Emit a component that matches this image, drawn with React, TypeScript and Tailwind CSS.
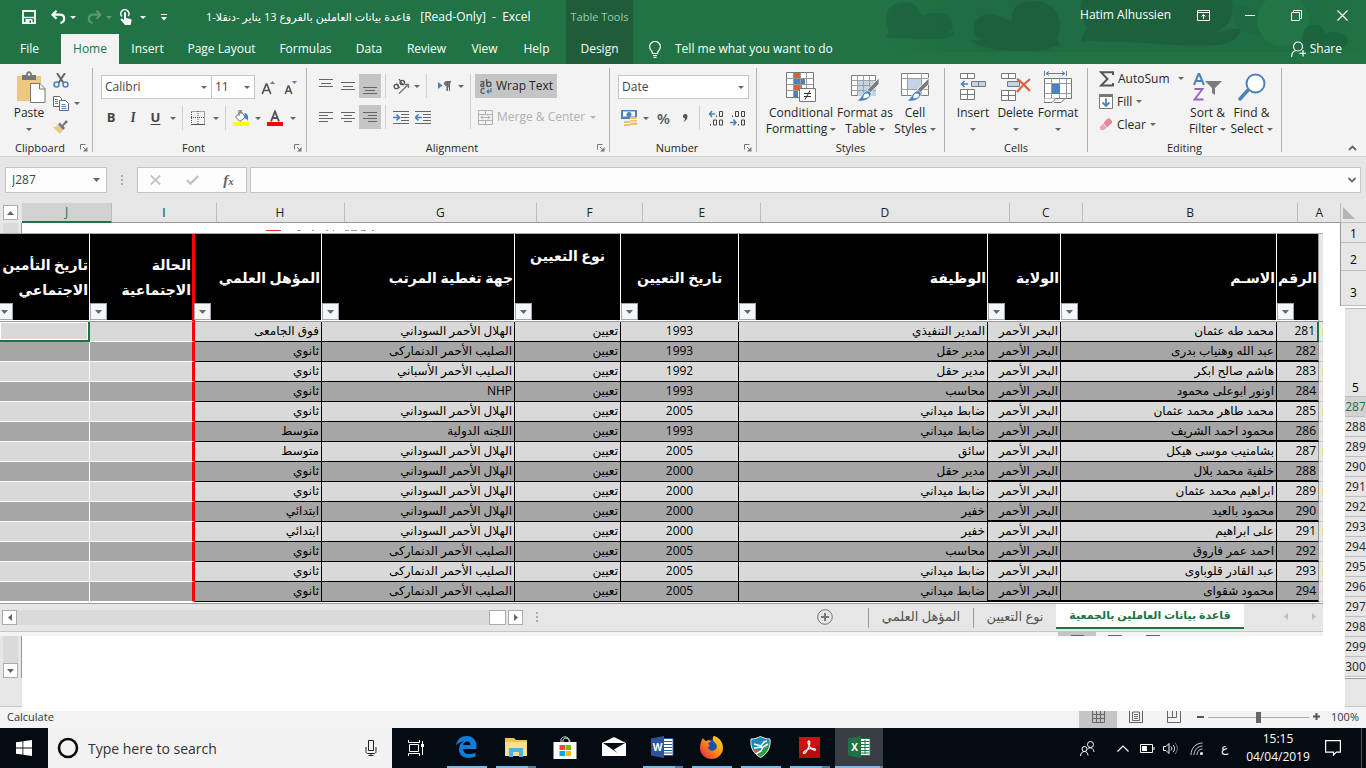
import React from "react";
import type { ReactNode } from "react";

/* ---------- shared bits ---------- */

function Caret({ className = "text-[#666]" }: { className?: string }) {
  return (
    <svg className={"h-[3px] w-[6px] shrink-0 " + className} viewBox="0 0 6 3" aria-hidden="true">
      <path d="M0 0h6L3 3z" fill="currentColor" />
    </svg>
  );
}

function CaretButton({ label, className = "w-3", disabled = false }: { label: string; className?: string; disabled?: boolean }) {
  return (
    <button aria-label={label} className={"flex h-6 items-center justify-center " + className}>
      <Caret className={disabled ? "text-[#b5b5b5]" : "text-[#666]"} />
    </button>
  );
}

function IconButton({
  label,
  className = "w-[22px]",
  active = false,
  children,
}: {
  label: string;
  className?: string;
  active?: boolean;
  children: ReactNode;
}) {
  return (
    <button
      aria-label={label}
      className={"flex h-6 shrink-0 items-center justify-center " + className + (active ? " bg-[#c5c5c5]" : "")}
    >
      {children}
    </button>
  );
}

function Divider() {
  return <div className="h-6 w-px shrink-0 bg-[#d0d0d0]" />;
}

function Launcher({ label }: { label: string }) {
  return (
    <button aria-label={label} className="mr-1 shrink-0">
      <svg className="h-2 w-2" viewBox="0 0 8 8" fill="none" stroke="#777">
        <path d="M.5 5.500V.5h5M3 3l3 3" />
        <path d="M7.500 3v4.500H3z" fill="#777" stroke="none" />
      </svg>
    </button>
  );
}

function Group({
  name,
  className,
  launcher = true,
  children,
}: {
  name: string;
  className: string;
  launcher?: boolean;
  children: ReactNode;
}) {
  return (
    <section aria-label={name} className={"flex shrink-0 " + className}>
      <div className="flex min-w-0 flex-1 flex-col">
        <div className="flex-1">{children}</div>
        <div className="flex h-4 items-center">
          <h2 className="flex-1 text-center text-[11px] leading-4 text-[#262626]">{name}</h2>
          {launcher && <Launcher label={name + " settings"} />}
        </div>
      </div>
      <div className="my-1 w-px bg-[#b1b1b1]" />
    </section>
  );
}

function BigButton({ lines, className, children }: { lines: [string, string?]; className: string; children: ReactNode }) {
  return (
    <button className={"flex shrink-0 flex-col items-center text-[12px] leading-4 whitespace-nowrap text-[#262626] " + className}>
      <span className="flex h-9 items-center justify-center">{children}</span>
      <span>{lines[0]}</span>
      <span className="flex h-4 items-center gap-[3px]">
        {lines[1]}
        <Caret />
      </span>
    </button>
  );
}

function LineIcon({ rows }: { rows: [number, number, number][] }) {
  return (
    <svg className="h-[18px] w-[14px]" viewBox="0 0 14 18" stroke="#666">
      {rows.map(([y, a, b]) => (
        <path key={y} d={`M${a} ${y + 0.5}H${b}`} />
      ))}
    </svg>
  );
}

/* ---------- header ---------- */

const tabs: [string, string][] = [
  ["File", "w-[59px]"],
  ["Home", "w-[58px]"],
  ["Insert", "w-[57px]"],
  ["Page Layout", "w-[91px]"],
  ["Formulas", "w-[77px]"],
  ["Data", "w-[50px]"],
  ["Review", "w-[65px]"],
  ["View", "w-[51px]"],
  ["Help", "w-[53px]"],
];

function Header() {
  return (
    <header className="flex h-16 shrink-0 bg-[#217346] text-[12px] text-white">
      <div className="flex w-[566px] shrink-0 flex-col">
        <div className="flex h-[34px] items-center">
          <button aria-label="Save" className="ml-[22px]">
            <svg className="h-[14px] w-[14px]" viewBox="0 0 14 14" fill="none" stroke="#fff" strokeWidth="1.800">
              <path d="M1 1h12v12H1z" />
              <path d="M2 7.500h10" strokeWidth="1.400" />
              <path d="M3.500 9h7v4.500h-7z" fill="#fff" stroke="none" />
              <path d="M7.500 10.500H9V13H7.500z" fill="#217346" stroke="none" />
            </svg>
          </button>
          <button aria-label="Undo" className="ml-[15px]">
            <svg className="h-[14px] w-[15px]" viewBox="0 0 15 14" fill="none" stroke="#fff" strokeWidth="2.200">
              <path d="M5.500 .8 1.500 4.700l4 4M2 4.700h7c5.500 0 5.500 7 .5 8.300" />
            </svg>
          </button>
          <Caret className="ml-[4px] text-white" />
          <button aria-label="Redo" className="ml-[11px] opacity-25">
            <svg className="h-[14px] w-[15px]" viewBox="0 0 15 14" fill="none" stroke="#fff" strokeWidth="2.200">
              <path d="M9.500 .8l4 3.900-4 4M13 4.700H6c-5.500 0-5.500 7-.5 8.300" />
            </svg>
          </button>
          <Caret className="ml-[4px] text-white opacity-30" />
          <button aria-label="Touch mode" className="ml-[8px]">
            <svg className="h-4 w-3" viewBox="0 0 12 16" fill="#fff">
              <path d="M4 4c0-1.500 2-1.500 2 0v5l4.500 1c1 .3 1.300 1 1 2l-1 4H5L.8 11c-.6-1 .7-2 1.600-1.200L4 11z" />
              <path d="M2 7.500A4 4 0 1 1 8.200 7" fill="none" stroke="#fff" strokeWidth="1.400" />
            </svg>
          </button>
          <Caret className="ml-[8px] text-white" />
          <button aria-label="Customize toolbar" className="ml-[15px]">
            <svg className="h-[7px] w-[6px]" viewBox="0 0 6 7" fill="#fff">
              <path d="M0 0h6v1H0zM0 3h6L3 6.500z" />
            </svg>
          </button>
          <h1 className="ml-[39px] text-[12px] leading-4 whitespace-pre">
            <bdi dir="rtl" className="text-[11px]">قاعدة بيانات العاملين بالفروع 13 يناير -دنقلا-1</bdi>
            {"   [Read-Only]  -  Excel"}
          </h1>
        </div>
        <nav className="flex h-[30px]">
          {tabs.map(([name, width]) => (
            <button
              key={name}
              className={
                "flex shrink-0 items-center justify-center whitespace-nowrap " +
                width +
                (name === "Home" ? " ml-[2px] bg-[#f3f3f3] text-[#217346]" : "")
              }
            >
              {name}
            </button>
          ))}
        </nav>
      </div>
      <div className="flex w-[67px] shrink-0 flex-col bg-[#1e5c3a]">
        <div className="flex h-[34px] items-center justify-center text-[11px] whitespace-nowrap text-[#9ccdae]">Table Tools</div>
        <button className="h-[30px]">Design</button>
      </div>
      <div className="relative flex min-w-0 flex-1 flex-col">
        <svg className="absolute top-0 right-0 h-[52px] w-[480px]" viewBox="0 0 480 52" fill="#1c613c" aria-hidden="true">
          <defs>
            <linearGradient id="shade" x1="0" y1="0" x2="1" y2="0">
              <stop offset="0" stopColor="#1c613c" stopOpacity="0" />
              <stop offset=".2" stopColor="#1c613c" stopOpacity=".4" />
              <stop offset=".85" stopColor="#1c613c" stopOpacity=".3" />
              <stop offset="1" stopColor="#1c613c" stopOpacity=".1" />
            </linearGradient>
          </defs>
          <path d="M0 0h480v52H0z" fill="url(#shade)" />
          <path d="M0 16C2 6 10 2 18 2c12 0 16 8 18 14 12-6 28-4 30 6 2 6 0 9-6 11 6 0 10-2 8 2-10 8-40 2-68 3 2-4 3-6 2-10-3-3-3-8-2-12z" opacity=".75" />
          <path d="M88 32c-2-12 8-20 20-17 8 2 14 6 18 6-2-14 8-20 22-20 18 0 27 14 26 26-1 5-1 8-3 10 2 4 2 8 4 11-4-2-8-2-12 1-14 3-36 2-50 1-10-2-24-4-29-11 4 2 10 2 12 1-4-2-7-4-8-8z" opacity=".9" />
          <path d="M196 0h150c2 16-2 26-16 32 8 0 14-4 24-3 2 6-8 16-26 16-36 2-76-4-106-3-10 0-20-2-27 1 1-7 4-12 6-16-6-9-8-18-5-27z" />
          <path d="M346 10c8-6 20-4 28 2 6-4 14 0 16 4l-8 22-30-8z" opacity=".3" />
          <ellipse cx="397" cy="20" rx="26" ry="26" fill="#217546" />
          <path d="M417 40c-2-10 4-15 11-15 8 0 11 5 11 9 8-4 20-2 22 4s-2 9-6 11l-34 2c-2-4-3-7-4-11z" opacity=".8" />
        </svg>
        <div className="relative flex h-[34px] items-center justify-end pr-[18px] pb-1">
          <span className="leading-4">Hatim Alhussien</span>
          <button aria-label="Ribbon display options" className="ml-[26px]">
            <svg className="h-[11px] w-[13px]" viewBox="0 0 13 11" fill="none" stroke="#fff">
              <path d="M.5.5h12v10H.5zM.5 2.500h12M6.500 9V4.500M4.500 6.500l2-2 2 2" />
            </svg>
          </button>
          <button aria-label="Minimize" className="ml-[35px]">
            <svg className="h-[10px] w-[10px]" viewBox="0 0 10 10" stroke="#fff"><path d="M0 5.500h10" /></svg>
          </button>
          <button aria-label="Restore" className="ml-[36px]">
            <svg className="h-[11px] w-[11px]" viewBox="0 0 11 11" fill="none" stroke="#fff">
              <path d="M.5 2.500h8v8h-8zM2.500 2.500v-2h8v8h-2" />
            </svg>
          </button>
          <button aria-label="Close" className="ml-[35px]">
            <svg className="h-[11px] w-[11px]" viewBox="0 0 11 11" stroke="#fff" strokeWidth="1.200"><path d="m.5.5 10 10m0-10-10 10" /></svg>
          </button>
        </div>
        <div className="relative flex h-[30px] items-center pr-6 pl-4">
          <svg className="h-[17px] w-3" viewBox="0 0 12 17" fill="none" stroke="#fff" strokeWidth="1.200" aria-hidden="true">
            <path d="M3.500 12.500c0-3-2.900-3.500-2.900-7a5.400 5 0 0 1 10.800 0c0 3.500-2.900 4-2.900 7zM4 14.500h4M4.500 16.300h3" />
          </svg>
          <button className="ml-[14px] leading-4">Tell me what you want to do</button>
          <button className="ml-auto flex items-center gap-1 leading-4">
            <svg className="h-4 w-[15px]" viewBox="0 0 15 16" fill="none" stroke="#fff" strokeWidth="1.200" aria-hidden="true">
              <circle cx="7" cy="5.500" r="4.500" />
              <path d="M.6 16c0-4 2-6.500 5.400-6.500M12 9v6.500M8.500 12.300H15" />
            </svg>
            Share
          </button>
        </div>
      </div>
    </header>
  );
}

/* ---------- ribbon ---------- */

function ComboBox({ label, value, className }: { label: string; value: string; className: string }) {
  return (
    <div className={"relative flex h-6 items-center border border-[#c6c6c6] bg-white " + className}>
      <select
        aria-label={label}
        defaultValue={value}
        className="w-full appearance-none bg-transparent pl-[3px] text-[12px] leading-5 text-[#444] outline-none"
      >
        <option>{value}</option>
      </select>
      <span className="pointer-events-none absolute right-[4px] flex">
        <Caret />
      </span>
    </div>
  );
}

function Brush() {
  return (
    <g>
      <path d="M29 6v6l-9 9-3-3z" fill="#7c7c7c" stroke="#f3f3f3" strokeWidth=".8" />
      <path d="M16.500 19c3-1 6 2 4 5-3 5-9 6-14 4.500 5-1 5-7.500 10-9.500z" fill="#4a82bd" stroke="#f3f3f3" strokeWidth=".8" />
      <path d="M14 23c1-2 5-2 5 .5s-4 3-6 2.500c1-1 0-2 1-3z" fill="#fff" />
    </g>
  );
}

function TableGrid({ cell }: { cell: string }) {
  return (
    <g>
      <path d="M1.500 3.500h24v20h-24z" fill="#fff" stroke="#7c7c7c" />
      <path d={cell} fill="#c3d4e9" />
      <path d="M1.500 8.500h24m-24 5h24m-24 5h24M7.500 3.500v20m6-20v20m6-20v20" stroke="#a0a0a0" fill="none" />
    </g>
  );
}

function Ribbon() {
  return (
    <div className="flex h-[93px] shrink-0 border-b border-[#d2d2d2] bg-[#f3f3f3]">
      <Group name="Clipboard" className="w-[93px]">
        <div className="flex pt-[5px]">
          <BigButton lines={["Paste"]} className="ml-2 w-[42px]">
            <svg className="ml-[3px] h-[32px] w-[30px]" viewBox="0 0 30 32" aria-hidden="true">
              <path d="M1 5h24v25H1z" fill="#efc880" />
              <path d="M6 9V4h4c0-5 6-5 6 0h4v5z" fill="#777" />
              <circle cx="13" cy="3.500" r="1.200" fill="#fff" />
              <path d="M14.500 12.500H24l5 5v14H14.500z" fill="#fff" stroke="#777" />
              <path d="M23.500 12.500v5.500H29" fill="none" stroke="#777" />
            </svg>
          </BigButton>
          <div className="flex flex-col pl-[3px]">
            <button aria-label="Cut" className="h-[23px]">
              <svg className="h-[15px] w-4" viewBox="0 0 16 15" fill="none" strokeWidth="1.500">
                <path d="m4 0 6.500 10M12 0 5.500 10" stroke="#666" strokeWidth="2" />
                <circle cx="3.500" cy="11.500" r="2.500" stroke="#4a82bd" />
                <circle cx="12.500" cy="11.500" r="2.500" stroke="#4a82bd" />
              </svg>
            </button>
            <div className="flex h-[23px] items-center">
              <button aria-label="Copy">
                <svg className="h-[15px] w-4" viewBox="0 0 16 15" fill="#fff" stroke="#666">
                  <path d="M.5.5h6l2 2v8h-8z" />
                  <path d="M6.500 4.500h6l3 3v7h-9z" />
                  <path d="M2 3.500h3M2 5.500h3M2 7.500h3M8.500 8.500h4M8.500 10.500h5M8.500 12.500h5" stroke="#4a82bd" />
                </svg>
              </button>
              <CaretButton label="Copy options" className="w-4" />
            </div>
            <button aria-label="Format painter" className="h-[23px]">
              <svg className="h-[14px] w-[15px]" viewBox="0 0 15 14">
                <path d="M0 7.500 5 5l5 5-3 4z" fill="#efc880" />
                <path d="m5 4.500 2-2L9 5l4-5 2 2-4.500 4L12 8l-2 2z" fill="#777" />
              </svg>
            </button>
          </div>
        </div>
      </Group>

      <Group name="Font" className="w-[214px]">
        <div className="flex flex-col gap-[7px] pt-[11px] pl-2">
          <div className="flex h-6 items-center">
            <ComboBox label="Font name" value="Calibri" className="w-[111px]" />
            <ComboBox label="Font size" value="11" className="-ml-px w-11" />
            <IconButton label="Increase font size" className="ml-[3px] w-5">
              <svg className="h-[15px] w-[14px]" viewBox="0 0 14 15" fill="none">
                <path d="m1.200 14 4-10h.6l4 10M3 10.500h5" stroke="#555" strokeWidth="1.700" />
                <path d="M9 4h5l-2.500-3z" fill="#4a82bd" />
              </svg>
            </IconButton>
            <IconButton label="Decrease font size" className="ml-[2px] w-5">
              <svg className="h-[15px] w-[14px]" viewBox="0 0 14 15" fill="none">
                <path d="m2.200 14 3-8h.6l3 8M3.500 11.200h4" stroke="#555" strokeWidth="1.600" />
                <path d="M9 1h5l-2.500 3z" fill="#4a82bd" />
              </svg>
            </IconButton>
          </div>
          <div className="flex h-6 items-center text-[13px] text-[#444]">
            <IconButton label="Bold" className="w-5"><b>B</b></IconButton>
            <IconButton label="Italic" className="w-6"><i className="font-serif font-bold">I</i></IconButton>
            <IconButton label="Underline" className="w-[21px]"><span className="font-bold underline underline-offset-2">U</span></IconButton>
            <CaretButton label="Underline style" className="w-[13px]" />
            <div className="mx-[3px] flex"><Divider /></div>
            <IconButton label="Borders" className="w-6">
              <svg className="h-[14px] w-[14px]" viewBox="0 0 14 14" fill="none" stroke="#555">
                <path d="M.5.5h13v12.500M.5 1v12M7 0v13M0 6.500h14" strokeDasharray="1 1" />
                <path d="M0 13.500h14" />
              </svg>
            </IconButton>
            <CaretButton label="Border style" className="w-3" />
            <div className="mx-[3px] flex"><Divider /></div>
            <IconButton label="Fill color" className="w-6">
              <svg className="h-4 w-4" viewBox="0 0 16 16">
                <path d="M2.500 7 8 1.500 12.500 7 7 11.500z" fill="#fff" stroke="#666" />
                <path d="M6 6V0h2v4" fill="none" stroke="#666" />
                <path d="M11 3c4 0 5 4 3.500 8-1-3-3-3-4-3 1-2 2-3 .5-5z" fill="#4a82bd" />
                <path d="M0 12h16v4H0z" fill="#ff0" />
              </svg>
            </IconButton>
            <CaretButton label="Fill colors" className="w-[10px]" />
            <IconButton label="Font color" className="w-6">
              <svg className="h-4 w-4" viewBox="0 0 16 16">
                <path d="M4 11.500 8 1.500l4 10M5.500 8h5" fill="none" stroke="#555" strokeWidth="1.900" />
                <path d="M0 12h16v4H0z" fill="red" />
              </svg>
            </IconButton>
            <CaretButton label="Font colors" className="w-3" />
          </div>
        </div>
      </Group>

      <Group name="Alignment" className="w-[303px]">
        <div className="flex pt-[10px] pl-2">
          <div className="flex w-[155px] flex-col gap-[7px]">
            <div className="flex h-6 items-center">
              <IconButton label="Top align"><LineIcon rows={[[2, 0, 14], [6, 2, 12], [9, 0, 14]]} /></IconButton>
              <IconButton label="Middle align"><LineIcon rows={[[5, 0, 14], [9, 2, 12], [12, 0, 14]]} /></IconButton>
              <IconButton label="Bottom align" active><LineIcon rows={[[10, 0, 14], [13, 2, 12], [16, 0, 14]]} /></IconButton>
              <div className="mx-1 flex"><Divider /></div>
              <IconButton label="Orientation" className="w-[23px]">
                <svg className="h-4 w-[17px]" viewBox="0 0 17 16" fill="none" stroke="#555" strokeWidth="1.300">
                  <circle cx="3.300" cy="8.500" r="2.200" />
                  <path d="m3.500 5.500 3 4.500M6 1l4 6" />
                  <circle cx="9.300" cy="4.500" r="2.200" />
                  <path d="M6 15.500 15.500 6.500M12 6.500h3.500V10" stroke="#777" />
                </svg>
              </IconButton>
              <CaretButton label="Orientation options" className="w-2" />
              <div className="mx-[5px] flex"><Divider /></div>
              <IconButton label="Text direction" className="w-[25px]">
                <svg className="h-[10px] w-[14px]" viewBox="0 0 14 10">
                  <path d="M0 1v7l4.500-3.500z" fill="#4a82bd" />
                  <path d="M13 .5H8.500a2 2 0 0 0 0 4h.5V10M11.500.5V10M9.300.5V10" fill="#777" stroke="#666" />
                </svg>
              </IconButton>
              <CaretButton label="Text direction options" className="w-2" />
            </div>
            <div className="flex h-6 items-center">
              <IconButton label="Align left"><LineIcon rows={[[4, 0, 14], [7, 0, 9], [10, 0, 14], [13, 0, 9]]} /></IconButton>
              <IconButton label="Center"><LineIcon rows={[[4, 0, 14], [7, 3, 11], [10, 0, 14], [13, 3, 11]]} /></IconButton>
              <IconButton label="Align right" active><LineIcon rows={[[4, 0, 14], [7, 5, 14], [10, 0, 14], [13, 5, 14]]} /></IconButton>
              <div className="mx-1 flex"><Divider /></div>
              <IconButton label="Decrease indent">
                <svg className="h-[13px] w-4" viewBox="0 0 16 13" stroke="#666">
                  <path d="M0 .5h16M8 3.500h8M8 6.500h8M8 9.500h8M0 12.500h16" />
                  <path d="M0 6.500h6M3.500 3.500l3 3-3 3" stroke="#4a82bd" strokeWidth="1.700" fill="none" />
                </svg>
              </IconButton>
              <IconButton label="Increase indent">
                <svg className="h-[13px] w-4" viewBox="0 0 16 13" stroke="#666">
                  <path d="M0 .5h16M8 3.500h8M8 6.500h8M8 9.500h8M0 12.500h16" />
                  <path d="M1 6.500h6M3.500 3.500l-3 3 3 3" stroke="#4a82bd" strokeWidth="1.700" fill="none" />
                </svg>
              </IconButton>
            </div>
          </div>
          <div className="mr-1 w-px bg-[#d0d0d0]" />
          <div className="flex flex-col gap-[7px] text-[12px] whitespace-nowrap">
            <button className="flex h-6 w-[82px] items-center gap-1 bg-[#c5c5c5] pl-[5px] text-[#262626]">
              <svg className="h-[15px] w-3" viewBox="0 0 12 15" fill="none" stroke="#555" strokeWidth="1.300" aria-hidden="true">
                <path d="M.5 2.700h3.200v4.800H2a1.300 1.300 0 0 1 0-2.600h1.700M6.600 0v7.500" />
                <circle cx="8.800" cy="5.200" r="2.200" />
                <path d="M4.500 9.700H2.700a1.700 1.700 0 0 0-1.700 2v.6a1.700 1.700 0 0 0 1.700 2h1.800" />
                <path d="M11 9v3.500H7M9 10.500l-2 2 2 2" stroke="#4a82bd" />
              </svg>
              Wrap Text
            </button>
            <div className="flex h-6 items-center text-[#b1b1b1]">
              <button className="flex items-center gap-1 pl-[3px]">
                <svg className="h-[15px] w-[15px]" viewBox="0 0 15 15" fill="none" stroke="#b1b1b1" aria-hidden="true">
                  <path d="M.5.5h14v14H.5zM.5 4.500h14M.5 10.500h14M7.500.5v4M7.500 10.500v4M3 7.500h9M5 5.500l-2 2 2 2M10 5.500l2 2-2 2" />
                </svg>
                Merge &amp; Center
              </button>
              <CaretButton label="Merge options" className="w-4" disabled />
            </div>
          </div>
        </div>
      </Group>

      <Group name="Number" className="w-[147px]">
        <div className="flex flex-col gap-[7px] pt-[11px] pl-2">
          <ComboBox label="Number format" value="Date" className="w-[131px]" />
          <div className="flex h-6 items-center text-[#555]">
            <IconButton label="Accounting format">
              <svg className="h-4 w-4" viewBox="0 0 16 16">
                <path d="M0 0h16v9H0z" fill="#4a82bd" />
                <path d="M2 1.500h12v5H2z" fill="#fff" />
                <circle cx="8" cy="4.500" r="2.500" fill="#4a82bd" />
                <path d="M9 7h7v8H9zM3 11h6v5H3z" fill="#efc070" />
                <path d="M9 9.500h7M9 12h7M3 13.500h6" stroke="#fff" />
              </svg>
            </IconButton>
            <CaretButton label="Currency options" className="w-[11px]" />
            <IconButton label="Percent" className="w-[25px]"><span className="text-[15px] font-semibold">%</span></IconButton>
            <IconButton label="Comma style" className="w-[18px]">
              <svg className="h-[8px] w-[6px]" viewBox="0 0 6 8" fill="#555"><path d="M1 2.200a2.200 2.200 0 0 1 4.500 0C5.500 5 4 7 1.500 8c1-1.300 1.500-2 1.500-3.500C2 4.500 1 3.500 1 2.200z" /></svg>
            </IconButton>
            <div className="mx-[5px] flex"><Divider /></div>
            {["Increase decimal", "Decrease decimal"].map((label, i) => (
              <IconButton key={label} label={label}>
                <svg className="h-4 w-4" viewBox="0 0 16 16" fill="none" stroke="#444">
                  {i === 0 ? (
                    <>
                      <path d="M1 4h6M4 1 1.600 4 4 7" stroke="#4a82bd" strokeWidth="1.500" />
                      <path d="M8.500 5.500v1.500M11.500 1.500h3v5h-3zM2.500 14v1.500M5.500 10h3v5h-3zM11.500 10h3v5h-3z" />
                    </>
                  ) : (
                    <>
                      <path d="M2.500 5.500v1.500M5.500 1.500h3v5h-3zM11.500 1.500h3v5h-3zM8.500 14v1.500M11.500 10h3v5h-3z" />
                      <path d="M0 12.500h6M3.500 9.500l2.500 3-2.500 3" stroke="#4a82bd" strokeWidth="1.500" />
                    </>
                  )}
                </svg>
              </IconButton>
            ))}
          </div>
        </div>
      </Group>

      <Group name="Styles" className="w-[188px]" launcher={false}>
        <div className="flex pt-[5px] pl-[10px]">
          <BigButton lines={["Conditional", "Formatting"]} className="w-[68px]">
            <svg className="h-[31px] w-[30px]" viewBox="0 0 30 31" aria-hidden="true">
              <path d="M.5.500h27v25H.5z" fill="#fff" stroke="#777" />
              <path d="M8 1h6v5H8zM8 13h8v5H8z" fill="#d9613c" />
              <path d="M8 7h11v5H8zM8 19h4v6H8z" fill="#4a82bd" />
              <path d="M.5 6.500h27m-27 6h27m-27 6h27M7.500.5v25m7-25v25m6-25v25" stroke="#999" fill="none" />
              <path d="M13.500 16.500h16v13h-16z" fill="#fff" stroke="#777" />
              <path d="M18 21.500h7M18 24.500h7M24 18.500l-5 9" stroke="#333" />
            </svg>
          </BigButton>
          <BigButton lines={["Format as", "Table"]} className="w-[60px]">
            <svg className="h-[30px] w-[30px]" viewBox="0 0 30 30" fill="none" aria-hidden="true">
              <TableGrid cell="M8 9h18v15H8z" />
              <Brush />
            </svg>
          </BigButton>
          <BigButton lines={["Cell", "Styles"]} className="w-[40px]">
            <svg className="h-[30px] w-[30px]" viewBox="0 0 30 30" fill="none" aria-hidden="true">
              <path d="M1.500 1.500h27v22h-27z" fill="#fff" stroke="#7c7c7c" />
              <path d="M1.500 6.500h27m-27 11h27M7.500 1.500v22m14-22v22" stroke="#a0a0a0" />
              <path d="M8 7h13v10H8z" fill="#c3d4e9" />
              <Brush />
            </svg>
          </BigButton>
        </div>
      </Group>

      <Group name="Cells" className="w-[143px]" launcher={false}>
        <div className="flex pt-[5px] pl-[7px]">
          <BigButton lines={["Insert"]} className="w-[42px]">
            <svg className="h-[28px] w-[26px]" viewBox="0 0 26 28" fill="#fff" stroke="#777" aria-hidden="true">
              <path d="M.5.500h14v5H.5zM7.500.5v5M.5 16.500h14v10H.5zM7.500 16.500v10M.5 21.500h14" />
              <path d="M11.500 8.500h14v5h-14zM18.500 8.500v5" fill="#c3d4e9" />
              <path d="M1 11h7M4.500 8 1.500 11l3 3" fill="none" stroke="#4a82bd" strokeWidth="1.600" />
            </svg>
          </BigButton>
          <BigButton lines={["Delete"]} className="w-[43px]">
            <svg className="h-[28px] w-[30px]" viewBox="0 0 30 28" fill="#fff" stroke="#777" aria-hidden="true">
              <path d="M.5.500h14v5H.5zM7.500.5v5M.5 17.500h14v10H.5zM7.500 17.500v10M.5 22.500h14" />
              <path d="M6.500 8.500h12v5h-12z" fill="#c3d4e9" />
              <path d="M16 6c5 3 9 8 13 12M29 6c-5 4-9 8-13 13" fill="none" stroke="#d9613c" strokeWidth="2.200" />
            </svg>
          </BigButton>
          <BigButton lines={["Format"]} className="w-[42px]">
            <svg className="h-[32px] w-[28px]" viewBox="0 0 28 32" fill="none" stroke="#777" aria-hidden="true">
              <path d="M.5 0v5M22.500 0v5M2 2.500h19M5 .5l-3 2 3 2M18 .5l3 2-3 2" stroke="#4a82bd" />
              <path d="M.5 7.500h27v20H.5z" fill="#fff" />
              <path d="M.5 12.500h27m-27 10h27M7.500 7.500v20m8-20v20m7-20v20" stroke="#999" />
              <path d="M8 13h8v10H8z" fill="#4a82bd" stroke="none" />
              <path d="M0 27.500v4h8l4-4M10 31.500h7l4-4" fill="#fff" />
            </svg>
          </BigButton>
        </div>
      </Group>

      <Group name="Editing" className="w-[194px]" launcher={false}>
        <div className="flex pt-[3px] pl-[11px] text-[12px] text-[#262626]">
          <div className="flex w-[86px] flex-col">
            <button className="flex h-[23px] items-center gap-1">
              <svg className="h-4 w-[15px]" viewBox="0 0 15 16" fill="none" stroke="#555" strokeWidth="2" aria-hidden="true">
                <path d="M14 4V1.200H2L8.500 8 2 14.600h12V12" />
              </svg>
              AutoSum
              <span className="mr-px ml-auto flex"><Caret /></span>
            </button>
            <button className="flex h-[23px] items-center gap-1">
              <svg className="h-[15px] w-[14px]" viewBox="0 0 14 15" fill="none" aria-hidden="true">
                <path d="M.5.500h13v14H.5z" fill="#fff" stroke="#777" />
                <path d="M0 0h14v3H0z" fill="#777" />
                <path d="M7 4.500V12M3.500 8.500 7 12l3.500-3.500" stroke="#4a82bd" strokeWidth="1.800" />
              </svg>
              <span>Fill</span>
              <Caret />
            </button>
            <button className="flex h-[23px] items-center gap-1">
              <svg className="h-[13px] w-[14px]" viewBox="0 0 14 13" aria-hidden="true">
                <path d="m8 1 2-1 3 3v2l-5 4.500L4.500 5z" fill="#e8879c" />
                <path d="m4 5.500 3.500 4.300L5 12 2 12 .5 9.500z" fill="#f0a0b0" />
              </svg>
              <span>Clear</span>
              <Caret />
            </button>
          </div>
          <BigButton lines={["Sort &", "Filter"]} className="w-[45px] pt-[2px]">
            <svg className="h-[28px] w-[29px]" viewBox="0 0 29 28" fill="none" aria-hidden="true">
              <path d="m1 12 4.500-11h.8L11 12M2.500 8h7" stroke="#4a82bd" strokeWidth="2" />
              <path d="M1.500 16h8L1.500 26.500h9" stroke="#9a62b8" strokeWidth="1.900" />
              <path d="M12 8h17l-7 7v7l-3-2v-5z" fill="#7c7c7c" />
            </svg>
          </BigButton>
          <BigButton lines={["Find &", "Select"]} className="w-[43px] pt-[2px]">
            <svg className="h-[28px] w-[28px]" viewBox="0 0 28 28" fill="none" stroke="#4a82bd" aria-hidden="true">
              <circle cx="17.500" cy="10.500" r="9" fill="#fff" strokeWidth="2" />
              <path d="m10 17-8 9" strokeWidth="3.500" strokeLinecap="round" />
            </svg>
          </BigButton>
        </div>
      </Group>
      <div className="flex flex-1 items-end justify-end pr-[9px] pb-[5px]">
        <button aria-label="Collapse ribbon">
          <svg className="h-[6px] w-[9px]" viewBox="0 0 9 6" fill="none" stroke="#666" strokeWidth="1.800"><path d="m1 5 3.500-3.500L8 5" /></svg>
        </button>
      </div>
    </div>
  );
}

function FormulaBar() {
  return (
    <div className="flex h-[46px] shrink-0 items-start bg-[#e6e6e6] px-[5px] pt-[10px]">
      <div className="relative flex h-[26px] w-[102px] items-center border border-[#c6c6c6] bg-[#fdfdfd]">
        <input aria-label="Name box" defaultValue="J287" className="w-full bg-transparent pl-[6px] text-[12px] text-[#444] outline-none" />
        <span className="pointer-events-none absolute right-[6px] flex">
          <svg className="h-1 w-[7px]" viewBox="0 0 7 4"><path d="M0 0h7L3.500 4z" fill="#666" /></svg>
        </span>
      </div>
      <svg className="mx-[14px] h-[26px] w-[2px]" viewBox="0 0 2 26" fill="#aaa" aria-hidden="true">
        <path d="M0 8h2v2H0zM0 12h2v2H0zM0 16h2v2H0z" />
      </svg>
      <div className="flex h-[26px] w-[110px] items-center justify-around border border-[#c6c6c6] bg-[#fdfdfd]">
        <button aria-label="Cancel">
          <svg className="h-[10px] w-[11px]" viewBox="0 0 11 10" stroke="#c3c3c3" strokeWidth="1.800"><path d="m.8.500 9.400 9m0-9-9.400 9" /></svg>
        </button>
        <button aria-label="Enter">
          <svg className="h-[10px] w-[13px]" viewBox="0 0 13 10" fill="none" stroke="#c3c3c3" strokeWidth="2.400"><path d="M.8 5 4.500 8.500 12.200 1" /></svg>
        </button>
        <button aria-label="Insert function" className="text-[15px] leading-4 font-bold text-[#666] italic [font-family:'Liberation_Serif',serif]">
          f<span className="text-[11px]">x</span>
        </button>
      </div>
      <div className="relative ml-[3px] flex h-[26px] min-w-0 flex-1 items-center border border-[#c6c6c6] bg-[#fdfdfd]">
        <input aria-label="Formula" className="w-full bg-transparent px-2 text-[12px] outline-none" />
        <svg className="absolute right-1 h-[6px] w-2" viewBox="0 0 8 6" fill="none" stroke="#666" strokeWidth="1.800"><path d="m.5 1 3.500 3.500L7.500 1" /></svg>
      </div>
    </div>
  );
}

/* ---------- sheet ---------- */

const columnHeads: [string, string][] = [
  ["J", "flex-[90]"],
  ["I", "flex-[104]"],
  ["H", "flex-[128]"],
  ["G", "flex-[193]"],
  ["F", "flex-[106]"],
  ["E", "flex-[118]"],
  ["D", "flex-[249]"],
  ["C", "flex-[73]"],
  ["B", "flex-[216]"],
  ["A", "flex-[42]"],
];

function ColumnHeads() {
  return (
    <div className="flex h-5 shrink-0 bg-[#e6e6e6]">
      <div className="flex w-[22px] justify-center pt-[2px] pr-px">
        <button aria-label="Scroll up" className="flex h-[15px] w-[15px] items-center justify-center border border-[#ababab] bg-white">
          <svg className="h-1 w-[7px]" viewBox="0 0 7 4"><path d="M0 4h7L3.500 0z" fill="#666" /></svg>
        </button>
      </div>
      {columnHeads.map(([name, grow]) => (
        <div
          key={name}
          className={
            "flex items-center justify-center border-r border-b border-r-[#bdbdbd] text-[12px] leading-4 " +
            grow +
            (name === "J" ? " border-b-2 border-b-[#217346] bg-[#d2d2d2] text-[#217346]" : " border-b-[#999] text-[#222]")
          }
        >
          {name}
        </div>
      ))}
      <button aria-label="Select all" className="w-[25px] border-b border-[#bdbdbd] pl-[2px]">
        <svg className="h-3 w-3" viewBox="0 0 12 12"><path d="M0 0v12h12z" fill="#b4b4b4" /></svg>
      </button>
    </div>
  );
}

const SUDAN = "الهلال الأحمر السوداني";
const DANISH = "الصليب الأحمر الدنماركى";
const SECONDARY = "ثانوي";
const FIELD = "ضابط ميداني";
const MANAGER = "مدير حقل";

const rows: [number, string, string, string, string, string][] = [
  [281, "محمد طه عثمان", "المدير التنفيذي", "1993", SUDAN, "فوق الجامعى"],
  [282, "عبد الله وهنياب بدرى", MANAGER, "1993", DANISH, SECONDARY],
  [283, "هاشم صالح ابكر", MANAGER, "1992", "الصليب الأحمر الأسباني", SECONDARY],
  [284, "اونور ابوعلى محمود", "محاسب", "1993", "NHP", SECONDARY],
  [285, "محمد طاهر محمد عثمان", FIELD, "2005", SUDAN, SECONDARY],
  [286, "محمود احمد الشريف", FIELD, "1993", "اللجنه الدولية", "متوسط"],
  [287, "بشامنيب موسى هيكل", "سائق", "2005", SUDAN, "متوسط"],
  [288, "خلفية محمد بلال", MANAGER, "2000", SUDAN, SECONDARY],
  [289, "ابراهيم محمد عثمان", FIELD, "2000", SUDAN, SECONDARY],
  [290, "محمود بالعيد", "خفير", "2000", SUDAN, "ابتدائي"],
  [291, "على ابراهيم", "خفير", "2000", SUDAN, "ابتدائي"],
  [292, "احمد عمر فاروق", "محاسب", "2005", DANISH, SECONDARY],
  [293, "عبد القادر قلوباوى", FIELD, "2005", DANISH, SECONDARY],
  [294, "محمود شقواى", FIELD, "2005", DANISH, SECONDARY],
];

const fields: { lines: string[]; align: string; filter: string }[] = [
  { lines: ["تاريخ التأمين", "الاجتماعي"], align: "justify-start", filter: "-left-1" },
  { lines: ["الحالة", "الاجتماعية"], align: "justify-start", filter: "left-0" },
  { lines: ["المؤهل العلمي"], align: "justify-start", filter: "-left-px" },
  { lines: ["جهة تغطية المرتب"], align: "justify-start", filter: "left-0" },
  { lines: ["نوع التعيين"], align: "justify-center", filter: "left-0" },
  { lines: ["تاريخ التعيين"], align: "justify-center", filter: "left-0" },
  { lines: ["الوظيفة"], align: "justify-start", filter: "left-0" },
  { lines: ["الولاية"], align: "justify-start", filter: "left-0" },
  { lines: ["الاسـم"], align: "justify-start", filter: "left-0" },
  { lines: ["الرقم"], align: "justify-start", filter: "left-0" },
];

function Cell({ thick = false, children }: { thick?: boolean; children?: ReactNode }) {
  return (
    <td
      className={
        "h-5 border-r border-black p-0 pr-[2px] text-right align-top leading-[18px] whitespace-nowrap " +
        (thick ? "border-b-2" : "border-b")
      }
    >
      <bdi dir="rtl">{children}</bdi>
    </td>
  );
}

function StaffTable() {
  return (
    <table className="w-full table-fixed border-separate border-spacing-0 border-t border-[#ababab] text-[12px] text-black">
      <colgroup>
        <col className="w-[90px]" />
        <col className="w-[105px]" />
        <col className="w-[127px]" />
        <col className="w-[193px]" />
        <col className="w-[106px]" />
        <col className="w-[118px]" />
        <col className="w-[249px]" />
        <col className="w-[73px]" />
        <col className="w-[216px]" />
        <col className="w-[42px]" />
        <col className="w-1" />
      </colgroup>
      <thead>
        <tr>
          {fields.map((f, i) => (
            <th
              key={f.lines.join(" ")}
              scope="col"
              className={
                "relative h-[88px] border-b border-b-[#999] bg-black p-0 text-[14px] leading-[25px] font-bold whitespace-nowrap text-white " +
                (i === 1 ? "border-r-[3px] border-r-[#ff0000]" : i === 9 ? "border-r border-r-[#999]" : "border-r border-r-white")
              }
            >
              <div
                dir="rtl"
                className={
                  "flex h-[87px] items-center border-b border-white px-px text-right " + f.align + (i === 4 ? " pb-11" : "")
                }
              >
                <div>
                  {f.lines.map((line) => (
                    <div key={line}>{line}</div>
                  ))}
                </div>
              </div>
              <button
                aria-label={"Filter " + f.lines.join(" ")}
                className={"absolute bottom-px flex h-[17px] w-[17px] items-center justify-center border border-[#a0a5b0] bg-[#f4f6fa] " + f.filter}
              >
                <svg className="h-1 w-[7px]" viewBox="0 0 7 4"><path d="M0 0h7L3.500 4z" fill="#666" /></svg>
              </button>
            </th>
          ))}
          <td className="border-b border-[#999] bg-[#e6e6e6] p-0" />
        </tr>
      </thead>
      <tbody>
        {rows.map(([no, name, job, year, payer, degree], i) => {
          const shade = i % 2 ? "bg-[#a6a6a6]" : "bg-[#d9d9d9]";
          const thick = i % 2 === 1;
          return (
            <tr key={no} className={shade}>
              {i === 0 ? (
                <td className="h-5 border-r-2 border-b-2 border-[#217346] p-0 shadow-[inset_0_0_0_1px_white]" />
              ) : (
                <td className="h-5 border-r border-b border-white p-0" />
              )}
              <td className="h-5 border-r-[3px] border-b border-r-[#ff0000] border-b-white p-0" />
              <Cell>{degree}</Cell>
              <Cell>{payer}</Cell>
              <Cell>تعيين</Cell>
              <td className="h-5 border-r border-b border-black p-0 text-center align-top leading-[18px]">{year}</td>
              <Cell>{job}</Cell>
              <Cell thick={thick}>البحر الأحمر</Cell>
              <Cell thick={thick}>{name}</Cell>
              <td
                className={
                  "h-5 border-b-black p-0 pr-[2px] text-right align-top leading-[18px] " +
                  (i === 0 ? "border-r-2 border-r-[#217346] " : "border-r border-r-[#999] ") +
                  (thick ? "border-b-2" : "border-b")
                }
              >
                {no}
              </td>
              <td className="border-b border-[#c6c6c6] bg-[#e6e6e6] p-0">
                <div className="ml-auto h-2 w-px bg-[#f3d9a8]" />
              </td>
            </tr>
          );
        })}
      </tbody>
    </table>
  );
}

function SheetTabs() {
  return (
    <div className="flex h-[29px] items-start border-t border-b border-t-[#999] border-b-[#c6c6c6] bg-[#e6e6e6] pl-[2px] text-[12px]">
      <div className="mt-[6px] flex h-[15px] w-[521px] shrink-0">
        <button aria-label="Scroll left" className="flex h-[15px] w-[15px] items-center justify-center border border-[#ababab] bg-white">
          <svg className="h-[7px] w-1" viewBox="0 0 4 7"><path d="M4 0v7L0 3.500z" fill="#666" /></svg>
        </button>
        <div className="flex-1 bg-[#dadada]" />
        <div className="w-[17px] border border-[#ababab] bg-white" />
        <button aria-label="Scroll right" className="ml-[2px] flex h-[15px] w-[15px] items-center justify-center border border-[#ababab] bg-white">
          <svg className="h-[7px] w-1" viewBox="0 0 4 7"><path d="M0 0v7l4-3.500z" fill="#666" /></svg>
        </button>
      </div>
      <svg className="mt-[8px] ml-[13px] h-[10px] w-[2px]" viewBox="0 0 2 10" fill="#aaa" aria-hidden="true">
        <path d="M0 0h2v2H0zM0 4h2v2H0zM0 8h2v2H0z" />
      </svg>
      <button aria-label="New sheet" className="mt-[5px] ml-auto">
        <svg className="h-4 w-4" viewBox="0 0 16 16" fill="none" stroke="#777">
          <circle cx="8" cy="8" r="7.300" />
          <path d="M8 4v8M4 8h8" strokeWidth="2" />
        </svg>
      </button>
      <div className="mt-1 ml-[35px] h-5 w-px bg-[#999]" />
      <button dir="rtl" className="h-[26px] w-[104px] text-[13px] text-[#555]">المؤهل العلمي</button>
      <div className="mt-1 h-5 w-px bg-[#999]" />
      <button dir="rtl" className="h-[26px] w-[82px] text-[13px] text-[#555]">نوع التعيين</button>
      <button dir="rtl" className="h-[25px] w-[188px] border-b-2 border-[#217346] bg-white text-[11px] font-bold whitespace-nowrap text-[#217346]">
        قاعدة بيانات العاملين بالجمعية
      </button>
      <div className="flex h-6 w-[79px] items-center justify-end gap-6 pr-[7px]">
        <svg className="h-[7px] w-1" viewBox="0 0 4 7"><path d="M4 0v7L0 3.500z" fill="#bbb" /></svg>
        <svg className="h-[7px] w-1" viewBox="0 0 4 7"><path d="M0 0v7l4-3.500z" fill="#bbb" /></svg>
      </div>
    </div>
  );
}

function RowHead({ children, className }: { children?: ReactNode; className: string }) {
  return <div className={"flex items-end justify-center border-b border-[#bdbdbd] text-[12px] leading-4 " + className}>{children}</div>;
}

function RowHeads() {
  const numbers = Array.from({ length: 14 }, (_, i) => 287 + i);
  return (
    <div className="flex w-[26px] shrink-0 flex-col items-end">
      <div className="w-full border-l border-[#999] bg-[#e6e6e6]">
        <RowHead className="h-5">1</RowHead>
        <RowHead className="h-7 pb-[2px]">2</RowHead>
        <RowHead className="h-[35px] pb-1">3</RowHead>
      </div>
      <div className="mt-[2px] w-[21px] border-t border-[#bdbdbd] bg-[#e6e6e6]">
        <RowHead className="h-[88px]">5</RowHead>
        {numbers.map((n) => (
          <RowHead key={n} className={"h-5 pb-px " + (n === 287 ? "bg-[#d2d2d2] text-[#217346]" : "text-[#222]")}>
            {n}
          </RowHead>
        ))}
      </div>
      <div className="mt-px h-[29px] w-[21px] border-t border-b border-t-[#999] border-b-[#c6c6c6] bg-[#e6e6e6]" />
      <div className="w-[21px] flex-1 bg-[#f3f3f3]" />
    </div>
  );
}

function Sheet() {
  return (
    <main className="flex flex-1 bg-white">
      <div className="flex min-w-0 flex-1 flex-col">
        <div className="flex h-[10px]">
          <div className="w-[22px] border-r border-[#999] bg-[#e6e6e6] px-[3px]">
            <div className="h-full bg-[#dadada]" />
          </div>
          <svg className="mt-[7px] ml-[244px] h-[2px] w-[115px]" viewBox="0 0 115 2" aria-hidden="true">
            <path d="M0 0h15v1H0z" fill="#e53030" />
            <path d="M31 .5h4m11 0h2m12 0h2m5 0h1m11 0h4m2 0h6m4 0h5m6 0h2" stroke="#999" />
          </svg>
        </div>
        <div className="mr-[17px]">
          <StaffTable />
          <div className="h-px bg-white" />
          <SheetTabs />
          <div className="flex h-1 items-end justify-end gap-6 bg-[#f3f3f3] pr-[163px]">
            <div className="flex h-full w-[38px] items-end justify-center bg-[#c5c5c5]">
              <div className="h-px w-[13px] bg-[#666]" />
            </div>
            <div className="-ml-3 h-px w-[14px] bg-[#666]" />
            <div className="h-px w-[14px] bg-[#666]" />
          </div>
        </div>
        <div className="flex w-[22px] flex-1 flex-col bg-[#e6e6e6]">
          <div className="flex h-[42px] flex-col border-r border-[#999] px-[3px]">
            <div className="flex-1 bg-[#dadada]" />
            <button aria-label="Scroll down" className="flex h-[15px] w-[15px] items-center justify-center border border-[#ababab] bg-white">
              <svg className="h-1 w-[7px]" viewBox="0 0 7 4"><path d="M0 0h7L3.500 4z" fill="#666" /></svg>
            </button>
          </div>
          <div className="h-[29px] border-b border-[#c6c6c6]" />
          <div className="flex-1 bg-[#f3f3f3]" />
        </div>
      </div>
      <RowHeads />
    </main>
  );
}

/* ---------- status bar and taskbar ---------- */

function StatusBar() {
  return (
    <footer className="flex h-[17px] shrink-0 items-start bg-[#f3f3f3] px-[7px] text-[11px] leading-3 text-[#333]">
      <span>Calculate</span>
      <div className="ml-auto flex items-start">
        <button aria-label="Normal view" className="flex h-[17px] w-[38px] justify-center bg-[#c5c5c5]">
          <svg className="h-3 w-[13px]" viewBox="0 0 13 12" fill="none" stroke="#666"><path d="M.5 0v11.500h12V0M0 3.500h13M0 7.500h13M4.500 0v12M8.500 0v12" /></svg>
        </button>
        <button aria-label="Page layout view" className="ml-3">
          <svg className="h-3 w-[14px]" viewBox="0 0 14 12" fill="none" stroke="#666"><path d="M.5 0v11.500h13V0M3.500 1v8.500h7V1zM5 3.500h4M5 5.500h4M5 7.500h4" /></svg>
        </button>
        <button aria-label="Page break view" className="ml-6">
          <svg className="h-3 w-[14px]" viewBox="0 0 14 12" fill="none" stroke="#666"><path d="M.5 0v11.500h13V0M5.500 0v7M0 6.500h9.500V0" /></svg>
        </button>
        <svg className="mt-[5px] ml-4 h-[2px] w-[7px]" viewBox="0 0 7 2" aria-hidden="true"><path d="M0 0h7v2H0z" fill="#555" /></svg>
        <div className="ml-1 flex h-3 w-[101px] items-center">
          <input
            type="range"
            aria-label="Zoom"
            min="10"
            max="190"
            defaultValue="100"
            className="h-px w-full appearance-none bg-[#aaa] [&::-webkit-slider-thumb]:h-[11px] [&::-webkit-slider-thumb]:w-[5px] [&::-webkit-slider-thumb]:appearance-none [&::-webkit-slider-thumb]:bg-[#666]"
          />
        </div>
        <svg className="mt-[2px] ml-1 h-[7px] w-[7px]" viewBox="0 0 7 7" aria-hidden="true"><path d="M2.500 0h2v2.500H7v2H4.500V7h-2V4.500H0v-2h2.500z" fill="#555" /></svg>
        <span className="ml-[11px]">100%</span>
      </div>
    </footer>
  );
}

function OfficeIcon({ color, dark, letter }: { color: string; dark: string; letter: string }) {
  return (
    <svg className="h-[22px] w-[23px]" viewBox="0 0 23 22" aria-hidden="true">
      <path d="M11 2.500h11v17H11z" fill="#fff" stroke={color} />
      <path d="M13 5.500h8M13 8.500h8M13 11.500h8M13 14.500h8M13 17h8" stroke={color} />
      {letter === "X" && <path d="M17 4v14" stroke={color} />}
      <path d="M0 2.500 13 0v22L0 19.500z" fill={dark} />
      <text x="6.500" y="14.800" fontSize="10" fontWeight="bold" fill="#fff" textAnchor="middle">{letter}</text>
    </svg>
  );
}

const apps: { name: string; line: string; icon: ReactNode }[] = [
  {
    name: "Edge",
    line: "full",
    icon: (
      <svg className="h-[22px] w-[21px]" viewBox="0 0 21 22" fill="#0f7edb" aria-hidden="true">
        <path d="M0 9.500C1 3 5.500 0 10.500 0 17 0 20.500 4.500 20.500 10v3H7c.3 6 8 6 12.500 3.500v4C13 23.500 3 22 3 13.500c0-4 2-6.500 5-8C4.500 5.500 1.500 7.500 0 9.500zM7 9h7.500c0-5-6.500-4.500-7.500 0z" />
      </svg>
    ),
  },
  {
    name: "File Explorer",
    line: "multi",
    icon: (
      <svg className="h-[19px] w-[22px]" viewBox="0 0 22 19" aria-hidden="true">
        <path d="M0 0h9l2 2h11v16H0z" fill="#f0c453" />
        <path d="M0 4h22v14H0z" fill="#fde08c" />
        <path d="M4 19v-9h14v9h-4v-5H8v5z" fill="#4bb4e6" />
      </svg>
    ),
  },
  {
    name: "Store",
    line: "none",
    icon: (
      <svg className="h-[23px] w-6" viewBox="0 0 24 23" aria-hidden="true">
        <path d="M8 6V3.500C9 0 15 0 16 3.500V6M10 6V4c1-3 7-2 7 2" fill="none" stroke="#ddd" />
        <path d="M.5 6h23v17H.5z" fill="#fff" />
        <path d="M6.500 9H12v5H6.500z" fill="#f25022" />
        <path d="M12.500 9H18v5h-5.500z" fill="#7fba00" />
        <path d="M6.500 15H12v5H6.500z" fill="#00a4ef" />
        <path d="M12.500 15H18v5h-5.500z" fill="#ffb900" />
      </svg>
    ),
  },
  {
    name: "Mail",
    line: "none",
    icon: (
      <svg className="h-[20px] w-6" viewBox="0 0 24 20" aria-hidden="true">
        <path d="M0 6 12 0l12 6v13H0z" fill="#fff" />
        <path d="M1 6h22l-11 6.500 3.500 3.500L1 6z" fill="#050b12" />
      </svg>
    ),
  },
  { name: "Word", line: "multi", icon: <OfficeIcon color="#2b5797" dark="#2a5699" letter="W" /> },
  {
    name: "Firefox",
    line: "full",
    icon: (
      <svg className="h-[23px] w-[23px]" viewBox="0 0 23 23" aria-hidden="true">
        <defs>
          <linearGradient id="flame" x1="1" y1="0" x2="0" y2="1">
            <stop offset="0" stopColor="#ffe629" />
            <stop offset=".5" stopColor="#ff8a16" />
            <stop offset="1" stopColor="#e31b4d" />
          </linearGradient>
        </defs>
        <circle cx="11.500" cy="11.500" r="8" fill="#1b4fa8" />
        <path d="M3 2c1 2 2 2.500 3 3C8 4 10 4 11 6c-2 0-3 1-3 2 2 1 2 2 0 3 0 4 5 5 8 2 2-3 0-6-3-8 0-2-1-4 1-5 4 1 9 5 9 12 0 6-5 11-11.500 11S0 18 0 12c0-4 1-7 3-10z" fill="url(#flame)" />
      </svg>
    ),
  },
  {
    name: "Security",
    line: "full",
    icon: (
      <svg className="h-[22px] w-[21px]" viewBox="0 0 21 22" aria-hidden="true">
        <path d="M1 3c4 0 6-1 9.500-2.500C14 2 16 3 20 3c1 9-3 15-9.500 18.500C4 18 0 12 1 3z" fill="#1989b8" />
        <path d="M20 8c-1 7-4 11-9.500 13.500L7 19l5-7z" fill="#2c9c4a" />
        <path d="M3 13h5l-1 6c-2-2-3-3-4-6z" fill="#d85a25" />
        <path d="M1 3c4 0 6-1 9.500-2.500C14 2 16 3 20 3c1 9-3 15-9.500 18.500C4 18 0 12 1 3z" fill="none" stroke="#eee" />
        <path d="m4 8 7 2 3-4 3-1M18 8l-5 3-2 4-5 3M4 12l8-1" fill="none" stroke="#fff" strokeWidth="1.500" />
      </svg>
    ),
  },
  {
    name: "Acrobat",
    line: "multi",
    icon: (
      <svg className="h-[21px] w-[21px]" viewBox="0 0 21 21" aria-hidden="true">
        <path d="M0 0h21v21H0z" fill="#b40d0d" />
        <path d="M0 0h21v8L0 14z" fill="#cc1414" />
        <path d="M9.500 4c2-.5 1.500 3 0 6.500C8 14 6 17 4.500 16.500 3.500 15 8 12 12 11.500c3-.3 5 .5 4.500 1.500-1.500 1-5-1.500-6.500-4.500C9 6.500 8.800 4.500 9.500 4z" fill="none" stroke="#fff" strokeWidth="1.200" />
      </svg>
    ),
  },
  { name: "Excel", line: "active", icon: <OfficeIcon color="#217346" dark="#1f7244" letter="X" /> },
];

function Taskbar() {
  return (
    <div className="flex h-10 shrink-0 bg-[#050b12] text-white">
      <button aria-label="Start" className="flex w-12 items-center justify-center">
        <svg className="h-4 w-4" viewBox="0 0 16 16" fill="#fff"><path d="M0 2.300 6.500 1.400v6.200H0zM7.300 1.300 16 0v7.600H7.300zM0 8.400h6.500v6.200L0 13.700zM7.300 8.400H16V16l-8.700-1.300z" /></svg>
      </button>
      <div className="flex w-[344px] items-center bg-[#f2f2f2] pr-[15px] pl-[9px]">
        <svg className="h-[22px] w-[22px] shrink-0" viewBox="0 0 22 22" fill="none" aria-hidden="true">
          <circle cx="11" cy="11" r="9" stroke="#0b0b0b" strokeWidth="2.600" />
        </svg>
        <input
          aria-label="Search"
          placeholder="Type here to search"
          className="ml-[9px] min-w-0 flex-1 bg-transparent text-[14px] text-[#333] outline-none placeholder:text-[#333]"
        />
        <svg className="h-4 w-3" viewBox="0 0 12 16" fill="none" stroke="#222" aria-hidden="true">
          <path d="M3.500.5h5v10h-5zM1 7v4.500c0 1.500 1 2 2 2h6c1 0 2-.5 2-2V7M6 13.500V16M3.500 15.500h5" />
        </svg>
      </div>
      <button aria-label="Task view" className="mr-[2px] flex w-12 items-center justify-center">
        <svg className="h-4 w-4" viewBox="0 0 16 16" fill="none" stroke="#fff">
          <path d="M1.500 4.500h9v7h-9zM.5 0v2.500h11V0M.5 16v-2.500h11V16M14.500 1v14" />
          <path d="M13 4h3v3h-3z" fill="#fff" stroke="none" />
        </svg>
      </button>
      {apps.map((app) => (
        <button
          key={app.name}
          aria-label={app.name}
          className={"flex flex-col items-center " + (app.line === "active" ? "ml-px w-12 bg-[#383d43]" : "w-[49px]")}
        >
          <span className="flex h-[38px] items-center">{app.icon}</span>
          {app.line !== "none" && (
            <span className={"flex h-[2px] " + (app.line === "active" ? "w-12" : "w-10")}>
              <span className="flex-1 bg-[#76b9ed]" />
              {(app.line === "multi" || app.line === "active") && <span className={app.line === "multi" ? "w-2 bg-[#517fa3]" : "w-[3px] bg-[#517fa3]"} />}
            </span>
          )}
        </button>
      ))}
      <div className="ml-auto flex items-center pr-1">
        <svg className="h-[15px] w-[15px]" viewBox="0 0 15 15" fill="none" stroke="#fff" aria-hidden="true">
          <circle cx="10.500" cy="3.500" r="3" />
          <circle cx="4.500" cy="8" r="2.500" />
          <path d="M.5 15c0-3 2-4.500 4-4.500s3.500 1.500 3.500 4M7.500 8c2-2 6-1.500 6.500 3" />
        </svg>
        <svg className="ml-[22px] h-[7px] w-3" viewBox="0 0 12 7" fill="none" stroke="#fff" strokeWidth="1.200" aria-hidden="true"><path d="m.5 6.500 5.500-5.500 5.500 5.500" /></svg>
        <svg className="ml-[11px] h-[9px] w-[15px]" viewBox="0 0 15 9" fill="none" stroke="#fff" aria-hidden="true">
          <path d="M.5.500h12v8H.5zM14 3v3" />
          <path d="M2 2h5v5H2z" fill="#fff" stroke="none" />
        </svg>
        <svg className="ml-2 h-[13px] w-4" viewBox="0 0 16 13" fill="none" stroke="#fff" aria-hidden="true">
          <path d="M.5 4.500h2.500l3-3v10l-3-3H.5zM8 4.500c1 1 1 3 0 4M10 3c2 2 2 5 0 7" />
          <path d="M12 1c3 3 3 8 0 11" stroke="#777" />
        </svg>
        <svg className="ml-[11px] h-[13px] w-[13px]" viewBox="0 0 13 13" fill="none" stroke="#ccc" aria-hidden="true">
          <path d="M1 13C1 6 6 1 12.500 1M4 13c0-5 4-9 8.500-9M7 13c0-3 2-6 5.500-6" />
          <circle cx="11.500" cy="11.500" r="1.500" fill="#fff" stroke="none" />
        </svg>
        <span lang="ar" className="ml-[18px] w-[7px] text-[12px]">ع</span>
        <div className="ml-[17px] w-[66px] text-center text-[12px] leading-[18px]">
          <div>15:15</div>
          <div>04/04/2019</div>
        </div>
        <svg className="ml-[14px] h-4 w-4" viewBox="0 0 16 16" fill="none" stroke="#fff" strokeWidth="1.200" aria-hidden="true"><path d="M.6.600h14.800v11.500h-4L8.500 15v-2.900H.6z" /></svg>
        <div className="ml-5 h-10 w-px bg-[#555]" />
      </div>
    </div>
  );
}

export default function App() {
  return (
    <div className="flex min-h-screen flex-col overflow-hidden bg-white [font-family:'Open_Sans','Noto_Sans','DejaVu_Sans',sans-serif]">
      <Header />
      <Ribbon />
      <FormulaBar />
      <ColumnHeads />
      <Sheet />
      <StatusBar />
      <Taskbar />
    </div>
  );
}
